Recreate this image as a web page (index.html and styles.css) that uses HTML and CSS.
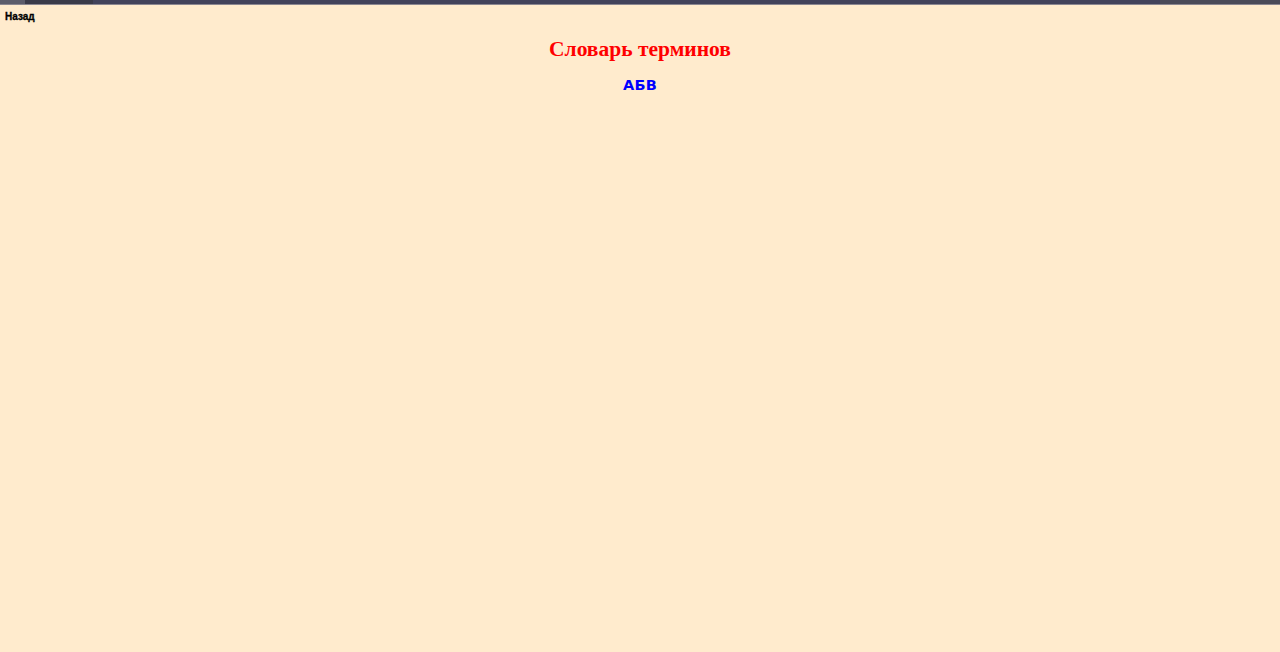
FILE: index.html
```html
<!DOCTYPE html>
<html lang="ru">
<head>
<meta charset="utf-8">
<title>Словарь терминов</title>
<link rel="stylesheet" href="styles.css">
</head>
<body>
<div class="topbar">
  <span class="seg seg-a"></span>
  <span class="seg seg-b"></span>
  <span class="seg seg-c"></span>
  <span class="seg seg-d"></span>
</div>
<a class="back" href="#">Назад</a>
<h1 class="title">Словарь терминов</h1>
<nav class="letters">
  <a href="#a">А</a><a href="#b">Б</a><a href="#v">В</a>
</nav>
</body>
</html>
```
FILE: styles.css
```css
html, body {
  margin: 0;
  padding: 0;
  background: #ffebcd;
  height: 100%;
}
.topbar {
  display: flex;
  height: 4px;
  border-bottom: 1px solid #8a8690;
}
.seg { display: block; height: 100%; }
.seg-a { width: 25px; background: #5c5c6a; }
.seg-b { width: 68px; background: #3a3a48; }
.seg-c { flex: 1; background: #42425a; }
.seg-d { width: 120px; background: #4a4a58; }
.back {
  display: block;
  margin: 5px 0 0 5px;
  font-family: "Liberation Sans", Arial, sans-serif;
  font-weight: bold;
  font-size: 10px;
  color: #000;
  text-decoration: none;
  line-height: 13px;
  -webkit-text-stroke: 0.3px #000;
}
.title {
  margin: 13px 0 0;
  text-align: center;
  font-family: "Liberation Serif", "Times New Roman", serif;
  font-weight: bold;
  font-size: 21.5px;
  line-height: 26px;
  color: #ff0000;
}
.letters {
  margin-top: 14px;
  display: flex;
  justify-content: center;
  gap: 0;
  font-family: "DejaVu Sans", Verdana, sans-serif;
  font-weight: bold;
  font-size: 14.5px;
  line-height: 18px;
}
.letters a {
  color: #0000ff;
  text-decoration: none;
  letter-spacing: 0.3px;
}
```
